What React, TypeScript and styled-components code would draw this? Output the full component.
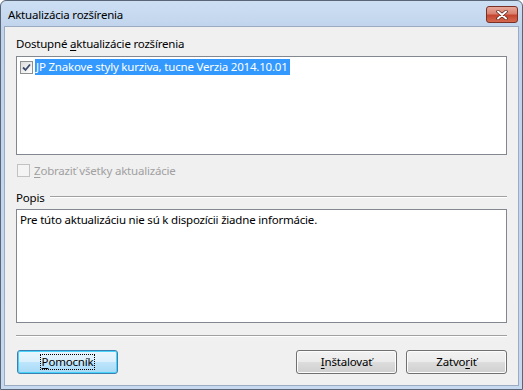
import styled, { createGlobalStyle } from "styled-components";

const GlobalStyle = createGlobalStyle`
  html, body {
    margin: 0;
    padding: 0;
    background: #ffffff;
  }
  body {
    font-family: "Noto Sans", "DejaVu Sans", sans-serif;
    font-size: 11.5px;
    letter-spacing: -0.2px;
    color: #000000;
  }
`;

const Window = styled.div`
  width: 523px;
  height: 390px;
  box-sizing: border-box;
  border: 1px solid #5a6678;
  border-radius: 6px 6px 0 0;
  background: linear-gradient(#cddff3, #bfd3eb 30px, #c6d9ef);
  display: flex;
  flex-direction: column;
  overflow: hidden;
`;

const TitleBar = styled.div`
  height: 25px;
  display: flex;
  align-items: center;
  justify-content: space-between;
  padding: 0 4px 0 7px;
`;

const Title = styled.span`
  color: #000000;
  margin-top: 1px;
`;

const CloseButton = styled.div`
  width: 30px;
  height: 15px;
  margin-top: 2px;
  border: 1px solid #7a3025;
  border-radius: 3px;
  background: linear-gradient(#e8a89a, #d9816f 45%, #c5452f 55%, #d46a4f);
  display: flex;
  align-items: center;
  justify-content: center;
`;

const Panel = styled.div`
  flex: 1;
  margin: 0 3px 3px 3px;
  border: 1px solid #9aabc2;
  background: #f0f0f0;
  padding: 0 11px 0 11px;
  display: flex;
  flex-direction: column;
`;

const Label = styled.div`
  height: 16px;
  line-height: 16px;
  margin-top: 9px;
`;

const Key = styled.span`
  text-decoration: underline;
  text-underline-offset: 2px;
`;

const ListBox = styled.div`
  height: 99px;
  margin-top: 4px;
  box-sizing: border-box;
  border: 1px solid #828790;
  background: #ffffff;
  padding: 2px 3px;
`;

const ItemRow = styled.div`
  display: flex;
  align-items: center;
  gap: 2px;
  height: 16px;
`;

const Box = styled.span<{ $disabled?: boolean }>`
  width: 13px;
  height: 13px;
  box-sizing: border-box;
  border: 1px solid ${(p) => (p.$disabled ? "#c2c2c2" : "#8e8f8f")};
  background: ${(p) =>
    p.$disabled ? "#f4f4f4" : "linear-gradient(135deg, #dcdcdc, #ffffff)"};
  display: flex;
  align-items: center;
  justify-content: center;
  flex-shrink: 0;
`;

const Selected = styled.span`
  background: #3399ff;
  color: #ffffff;
  padding: 0 2px 0 1px;
  line-height: 16px;
`;

const CheckRow = styled.div`
  display: flex;
  align-items: center;
  gap: 4px;
  margin-top: 7px;
  margin-left: 1px;
  height: 16px;
`;

const Disabled = styled.span`
  color: #a0a0a0;
`;

const GroupRow = styled.div`
  display: flex;
  align-items: center;
  gap: 6px;
  margin-top: 11px;
  height: 16px;
`;

const Rule = styled.div`
  flex: 1;
  height: 1px;
  background: #a0a0a0;
  border-bottom: 1px solid #ffffff;
`;

const DescBox = styled.div`
  height: 114px;
  margin-top: 4px;
  box-sizing: border-box;
  border: 1px solid #828790;
  background: #ffffff;
  padding: 2px 3px;
  line-height: 16px;
`;

const Separator = styled.div`
  height: 1px;
  margin-top: 12px;
  background: #a0a0a0;
  border-bottom: 1px solid #ffffff;
`;

const ButtonRow = styled.div`
  display: flex;
  margin-top: 13px;
  gap: 9px;
  padding-left: 1px;
`;

const Spacer = styled.div`
  flex: 1;
`;

const Button = styled.div<{ $focused?: boolean }>`
  width: 101px;
  height: 24px;
  box-sizing: border-box;
  border: 1px solid ${(p) => (p.$focused ? "#3c7fb1" : "#707070")};
  border-radius: 3px;
  background: ${(p) =>
    p.$focused
      ? "linear-gradient(#eaf6fd, #d9f0fc 50%, #bee6fd 50%, #a7d9f5)"
      : "linear-gradient(#f2f2f2, #ebebeb 50%, #dddddd 50%, #cfcfcf)"};
  box-shadow: inset 0 0 0 1px
    ${(p) => (p.$focused ? "#48d3fb" : "#fcfcfc")};
  display: flex;
  align-items: center;
  justify-content: center;
`;

const ButtonText = styled.span<{ $focused?: boolean }>`
  line-height: 14px;
  padding: 0 1px;
  outline: ${(p) => (p.$focused ? "1px dotted #000000" : "none")};
`;

function CheckMark() {
  return (
    <svg width="9" height="9" viewBox="0 0 9 9">
      <path
        d="M1 4.5 L3.5 7 L8 1.5"
        fill="none"
        stroke="#3d4b6b"
        strokeWidth="1.8"
      />
    </svg>
  );
}

function CloseGlyph() {
  return (
    <svg width="12" height="10" viewBox="0 0 12 10">
      <path
        d="M2 1.5 L10 8.5 M10 1.5 L2 8.5"
        stroke="#5a2118"
        strokeWidth="3.4"
        strokeLinecap="round"
      />
      <path
        d="M2 1.5 L10 8.5 M10 1.5 L2 8.5"
        stroke="#ffffff"
        strokeWidth="2"
        strokeLinecap="round"
      />
    </svg>
  );
}

function App() {
  return (
    <>
      <GlobalStyle />
      <Window>
        <TitleBar>
          <Title>Aktualizácia rozšírenia</Title>
          <CloseButton>
            <CloseGlyph />
          </CloseButton>
        </TitleBar>
        <Panel>
          <Label>
            Dostupné <Key>a</Key>ktualizácie rozšírenia
          </Label>
          <ListBox>
            <ItemRow>
              <Box>
                <CheckMark />
              </Box>
              <Selected>JP Znakove styly kurziva, tucne Verzia 2014.10.01</Selected>
            </ItemRow>
          </ListBox>
          <CheckRow>
            <Box $disabled />
            <Disabled>
              <Key>Z</Key>obraziť všetky aktualizácie
            </Disabled>
          </CheckRow>
          <GroupRow>
            <span>Popis</span>
            <Rule />
          </GroupRow>
          <DescBox>Pre túto aktualizáciu nie sú k dispozícii žiadne informácie.</DescBox>
          <Separator />
          <ButtonRow>
            <Button $focused>
              <ButtonText $focused>
                <Key>P</Key>omocník
              </ButtonText>
            </Button>
            <Spacer />
            <Button>
              <ButtonText>
                <Key>I</Key>nštalovať
              </ButtonText>
            </Button>
            <Button>
              <ButtonText>
                Zatvo<Key>r</Key>iť
              </ButtonText>
            </Button>
          </ButtonRow>
        </Panel>
      </Window>
    </>
  );
}

export default App;
